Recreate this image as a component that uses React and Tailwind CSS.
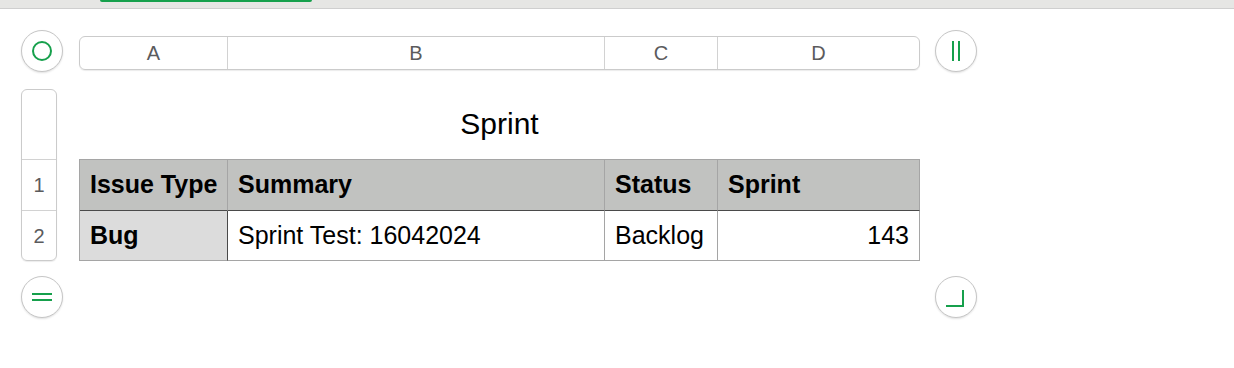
const font = { fontFamily: '"Liberation Sans", Arial, sans-serif' };

const cols = [
  { key: "A", w: "w-[148px]" },
  { key: "B", w: "w-[377px]" },
  { key: "C", w: "w-[113px]" },
  { key: "D", w: "w-[202px]" },
];

const CircleBtn = ({ children }) => (
  <div className="w-[42px] h-[42px] shrink-0 rounded-full border border-[#c6c6c6] bg-white shadow-[0_1px_2px_rgba(0,0,0,0.12)] flex items-center justify-center">
    {children}
  </div>
);

const App = () => {
  return (
    <div className="w-[1234px] h-[368px] bg-white overflow-hidden" style={font}>
      {/* barre du haut */}
      <div className="h-[9px] bg-[#e6e6e4] border-b border-[#cfcfcf] pl-[100px]">
        <div className="w-[212px] h-[2px] bg-[#16a04c] rounded-b-full" />
      </div>

      {/* en-tetes de colonnes */}
      <div className="flex items-start pl-[21px] pt-[21px]">
        <CircleBtn>
          <div className="w-[20px] h-[20px] rounded-full border-2 border-[#16a04c]" />
        </CircleBtn>
        <div className="ml-[16px] mt-[6px] flex h-[34px] w-[841px] rounded-[6px] border border-[#cbcbcb] shadow-[0_1px_1px_rgba(0,0,0,0.08)] text-[20px] text-[#5b5b5d]">
          {cols.map((c, i) => (
            <div
              key={c.key}
              className={`${c.w} flex items-center justify-center ${i < 3 ? "border-r border-[#d2d2d2]" : "flex-1"}`}
            >
              {c.key}
            </div>
          ))}
        </div>
        <div className="ml-[15px]">
          <CircleBtn>
            <div className="flex gap-[4px]">
              <div className="w-[2px] h-[20px] bg-[#16a04c]" />
              <div className="w-[2px] h-[20px] bg-[#16a04c]" />
            </div>
          </CircleBtn>
        </div>
      </div>

      {/* lignes + tableau */}
      <div className="flex items-start pl-[21px] mt-[17px]">
        <div className="w-[36px] rounded-[6px] border border-[#cbcbcb] shadow-[0_1px_1px_rgba(0,0,0,0.08)] text-[20px] text-[#5b5b5d]">
          <div className="h-[70px] border-b border-[#d2d2d2]" />
          <div className="h-[51px] border-b border-[#d2d2d2] flex items-center justify-center">1</div>
          <div className="h-[49px] flex items-center justify-center">2</div>
        </div>

        <div className="ml-[22px] w-[841px]">
          <div className="h-[70px] flex items-center justify-center text-[30px] text-black pb-[1px]">Sprint</div>
          <div className="border-l border-t border-[#a5a5a5] text-[25px] text-black">
            <div className="flex bg-[#c1c2c0] font-bold">
              <div className="w-[148px] h-[51px] border-r border-b border-r-[#a5a5a5] border-b-[#4a4a4a] flex items-center pl-[10px]">Issue Type</div>
              <div className="w-[377px] h-[51px] border-r border-b border-r-[#a5a5a5] border-b-[#4a4a4a] flex items-center pl-[10px]">Summary</div>
              <div className="w-[113px] h-[51px] border-r border-b border-r-[#a5a5a5] border-b-[#4a4a4a] flex items-center pl-[10px]">Status</div>
              <div className="w-[202px] h-[51px] border-r border-b border-r-[#a5a5a5] border-b-[#4a4a4a] flex items-center pl-[10px]">Sprint</div>
            </div>
            <div className="flex">
              <div className="w-[148px] h-[50px] bg-[#dcdcdc] font-bold border-r border-b border-r-[#4a4a4a] border-b-[#a5a5a5] flex items-center pl-[10px]">Bug</div>
              <div className="w-[377px] h-[50px] border-r border-b border-[#a5a5a5] flex items-center pl-[10px]">Sprint Test: 16042024</div>
              <div className="w-[113px] h-[50px] border-r border-b border-[#a5a5a5] flex items-center pl-[10px]">Backlog</div>
              <div className="w-[202px] h-[50px] border-r border-b border-[#a5a5a5] flex items-center justify-end pr-[10px]">143</div>
            </div>
          </div>
        </div>
      </div>

      {/* boutons du bas */}
      <div className="flex items-start pl-[21px] mt-[15px]">
        <CircleBtn>
          <div className="flex flex-col gap-[4px]">
            <div className="w-[20px] h-[2px] bg-[#16a04c]" />
            <div className="w-[20px] h-[2px] bg-[#16a04c]" />
          </div>
        </CircleBtn>
        <div className="ml-[872px]">
          <CircleBtn>
            <div className="w-[18px] h-[17px] border-r-2 border-b-2 border-[#16a04c] -translate-x-[1px] translate-y-[1px]" />
          </CircleBtn>
        </div>
      </div>
    </div>
  );
};

export default App;
